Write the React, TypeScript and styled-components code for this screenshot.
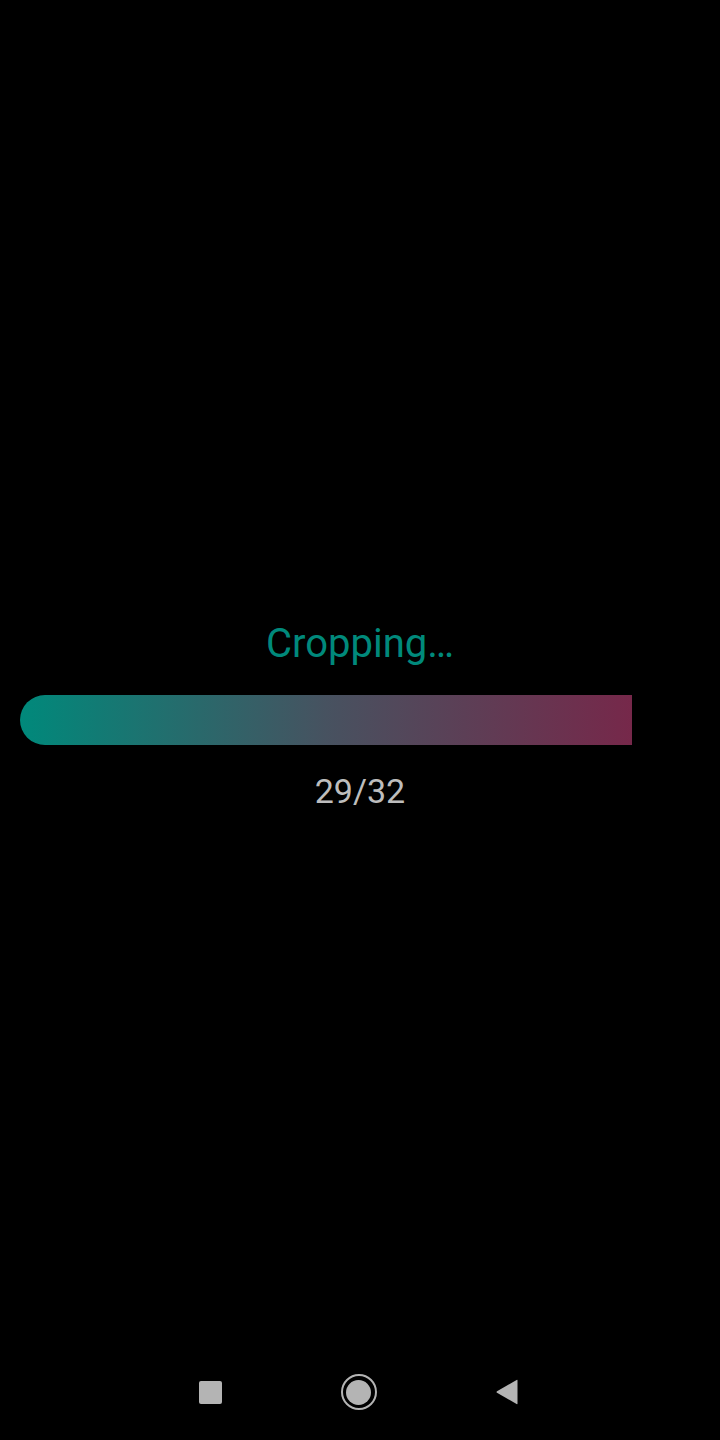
import React from "react";
import styled, { createGlobalStyle } from "styled-components";

const Global = createGlobalStyle`
  html, body { margin: 0; padding: 0; background: #000; }
  body { font-family: Roboto, "Noto Sans", sans-serif; }
`;

const Screen = styled.div`
  width: 720px;
  height: 1440px;
  background: #000;
  display: flex;
  flex-direction: column;
`;

const Main = styled.div`
  flex: 1;
  display: flex;
  flex-direction: column;
  justify-content: center;
  align-items: stretch;
  padding: 0 20px;
  padding-top: 88px;
`;

const Title = styled.div`
  color: #00897b;
  font-size: 40px;
  line-height: 46px;
  text-align: center;
  margin-bottom: 28px;
`;

const Track = styled.div`
  height: 50px;
  width: 100%;
`;

const Fill = styled.div`
  height: 100%;
  border-radius: 25px 0 0 25px;
  background: linear-gradient(90deg, #00897b 0%, #475260 50%, #76284a 100%);
`;

const Count = styled.div`
  color: #bdbdbd;
  font-size: 34px;
  line-height: 40px;
  text-align: center;
  margin-top: 26px;
`;

const NavBar = styled.div`
  height: 96px;
  display: flex;
  justify-content: center;
  align-items: center;
  padding-right: 3px;
`;

const NavSlot = styled.div`
  width: 148px;
  display: flex;
  justify-content: center;
  align-items: center;
`;

const Square = styled.div`
  width: 23px;
  height: 23px;
  border-radius: 2px;
  background: #b4b4b4;
`;

const Home = styled.div`
  width: 32px;
  height: 32px;
  border-radius: 50%;
  border: 2px solid #b4b4b4;
  display: flex;
  align-items: center;
  justify-content: center;
`;

const HomeDot = styled.div`
  width: 25px;
  height: 25px;
  border-radius: 50%;
  background: #b4b4b4;
`;

export default function App() {
  const done = 29;
  const total = 32;
  return (
    <Screen>
      <Global />
      <Main>
        <Title>Cropping…</Title>
        <Track>
          <Fill style={{ width: "90%" }} />
        </Track>
        <Count>
          {done}/{total}
        </Count>
      </Main>
      <NavBar>
        <NavSlot>
          <Square />
        </NavSlot>
        <NavSlot>
          <Home>
            <HomeDot />
          </Home>
        </NavSlot>
        <NavSlot>
          <svg width="24" height="26" viewBox="0 0 24 26">
            <path d="M22.5 1.5 L22.5 24.5 Q22.5 25.5 21.6 25 L2 13.8 Q1 13 2 12.2 L21.6 1 Q22.5 0.5 22.5 1.5 Z" fill="#b4b4b4" />
          </svg>
        </NavSlot>
      </NavBar>
    </Screen>
  );
}
